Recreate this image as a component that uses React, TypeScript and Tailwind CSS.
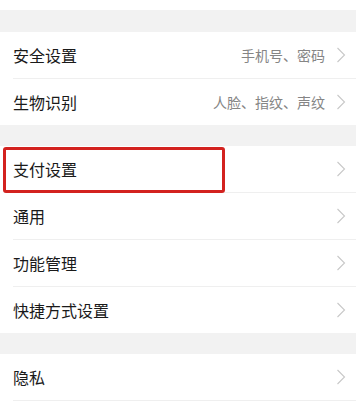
import { ReactNode } from 'react'

type Item = {
  label: string
  hint?: string
}

function Chevron() {
  return (
    <svg width="10" height="16" viewBox="0 0 10 16" className="shrink-0">
      <path d="M1.5 1 L8.5 8 L1.5 15" fill="none" stroke="#c8c8c8" strokeWidth="1.1" />
    </svg>
  )
}

function Row({ item, last, children }: { item: Item; last?: boolean; children?: ReactNode }) {
  return (
    <div className="relative bg-white">
      <div className="h-[46px] flex items-center pl-[13px] pr-[10px]">
        <span className="flex-1 text-[16px] text-[#1a1a1a]">{item.label}</span>
        {item.hint && <span className="text-[14px] text-[#858585] mr-[11px]">{item.hint}</span>}
        <Chevron />
      </div>
      {!last && <div className="ml-[13px] h-px bg-[#efefef]" />}
      {children}
    </div>
  )
}

const groupA: Item[] = [
  { label: '安全设置', hint: '手机号、密码' },
  { label: '生物识别', hint: '人脸、指纹、声纹' },
]

const groupB: Item[] = [
  { label: '支付设置' },
  { label: '通用' },
  { label: '功能管理' },
  { label: '快捷方式设置' },
]

export default function App() {
  return (
    <div
      className="w-[356px] h-[410px] overflow-hidden bg-white flex flex-col"
      style={{ fontFamily: '"Noto Sans CJK SC", "Noto Sans", sans-serif' }}
    >
      <div className="h-[10px] bg-white shrink-0" />
      <div className="h-[22px] bg-[#f2f2f2] shrink-0" />

      {groupA.map((item, i) => (
        <Row key={item.label} item={item} last={i === groupA.length - 1} />
      ))}

      <div className="h-[21px] bg-[#f2f2f2] shrink-0" />

      {groupB.map((item, i) => (
        <Row key={item.label} item={item} last={i === groupB.length - 1}>
          {/* red highlight around 支付设置 */}
          {i === 0 && (
            <div className="absolute left-[3px] top-[1px] w-[222px] h-[46px] border-[3px] border-[#d3221f] rounded-[3px]" />
          )}
        </Row>
      ))}

      <div className="h-[21px] bg-[#f2f2f2] shrink-0" />

      <Row item={{ label: '隐私' }} />
    </div>
  )
}
